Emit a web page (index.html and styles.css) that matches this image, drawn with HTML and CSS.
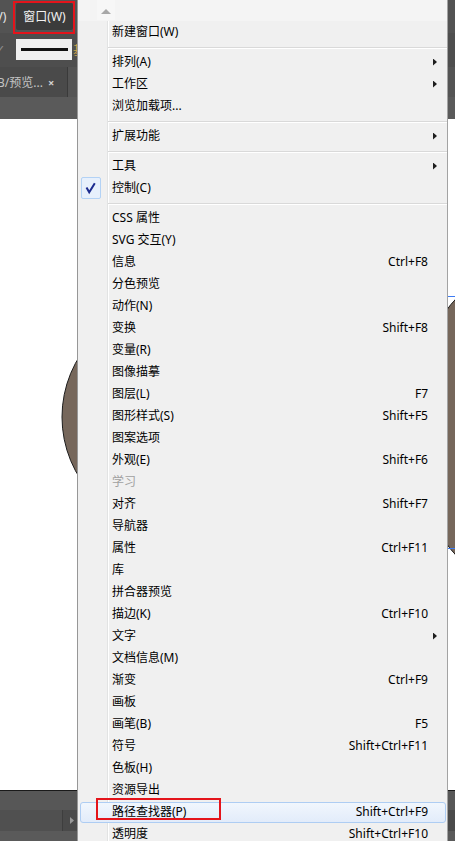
FILE: index.html
```html
<!DOCTYPE html>
<html lang="zh-CN">
<head>
    <meta charset="UTF-8">
    <meta name="viewport" content="width=device-width, initial-scale=1.0">
    <title>窗口菜单</title>
    <link rel="stylesheet" href="styles.css">
</head>
<body>
    <div class="app">
        <div class="menubar">
            <span class="menubar-prev">(V)</span>
            <span class="menubar-item">窗口(W)</span>
        </div>
        <div class="toolbar">
            <span class="tool-check">✓</span>
            <span class="stroke-box"><span class="stroke-line"></span></span>
            <span class="tool-label">基</span>
        </div>
        <div class="tabs">
            <span class="tab"><span class="tab-title">B/预览...</span><span class="tab-close">×</span></span>
        </div>
        <div class="rulerbar"></div>
        <div class="canvas">
            <svg width="455" height="671" viewBox="0 0 455 671">
                <circle cx="176" cy="298" r="114" fill="#76675b" stroke="#1e1e1e" stroke-width="1"/>
                <circle cx="600" cy="308" r="193" fill="#76675b" stroke="#1e1e1e" stroke-width="1"/>
                <rect x="300.5" y="177.5" width="400" height="252" fill="none" stroke="#3d7bf2" stroke-width="1"/>
            </svg>
        </div>
        <div class="status-top"></div>
        <div class="status-mid"><span class="status-box"></span><span class="status-arrow"></span></div>
        <div class="status-bottom"></div>
    </div>

    <!-- red annotation around the menu title -->
    <div class="mark mark-title"></div>

    <div class="dropdown">
        <div class="menu-top">
            <span class="scroll-up">
                <svg width="18" height="20" viewBox="0 0 18 20"><polygon points="4,14 9,9 14,14" fill="#a8a8a8"/></svg>
            </span>
        </div>
        <div class="menu-list">
            <div class="menu-item"><span class="label">新建窗口(W)</span></div>
            <div class="menu-sep"></div>
            <div class="menu-item"><span class="label">排列(A)</span><span class="sub-arrow"></span></div>
            <div class="menu-item"><span class="label">工作区</span><span class="sub-arrow"></span></div>
            <div class="menu-item"><span class="label">浏览加载项...</span></div>
            <div class="menu-sep"></div>
            <div class="menu-item"><span class="label">扩展功能</span><span class="sub-arrow"></span></div>
            <div class="menu-sep"></div>
            <div class="menu-item"><span class="label">工具</span><span class="sub-arrow"></span></div>
            <div class="menu-item">
                <span class="check">
                    <svg width="20" height="22" viewBox="0 0 20 22"><path d="M5.5 10.5 L8.2 15.2 L13.8 6.2" fill="none" stroke="#1c2b8f" stroke-width="2"/></svg>
                </span>
                <span class="label">控制(C)</span>
            </div>
            <div class="menu-sep"></div>
            <div class="menu-item"><span class="label">CSS 属性</span></div>
            <div class="menu-item"><span class="label">SVG 交互(Y)</span></div>
            <div class="menu-item"><span class="label">信息</span><span class="shortcut">Ctrl+F8</span></div>
            <div class="menu-item"><span class="label">分色预览</span></div>
            <div class="menu-item"><span class="label">动作(N)</span></div>
            <div class="menu-item"><span class="label">变换</span><span class="shortcut">Shift+F8</span></div>
            <div class="menu-item"><span class="label">变量(R)</span></div>
            <div class="menu-item"><span class="label">图像描摹</span></div>
            <div class="menu-item"><span class="label">图层(L)</span><span class="shortcut">F7</span></div>
            <div class="menu-item"><span class="label">图形样式(S)</span><span class="shortcut">Shift+F5</span></div>
            <div class="menu-item"><span class="label">图案选项</span></div>
            <div class="menu-item"><span class="label">外观(E)</span><span class="shortcut">Shift+F6</span></div>
            <div class="menu-item disabled"><span class="label">学习</span></div>
            <div class="menu-item"><span class="label">对齐</span><span class="shortcut">Shift+F7</span></div>
            <div class="menu-item"><span class="label">导航器</span></div>
            <div class="menu-item"><span class="label">属性</span><span class="shortcut">Ctrl+F11</span></div>
            <div class="menu-item"><span class="label">库</span></div>
            <div class="menu-item"><span class="label">拼合器预览</span></div>
            <div class="menu-item"><span class="label">描边(K)</span><span class="shortcut">Ctrl+F10</span></div>
            <div class="menu-item"><span class="label">文字</span><span class="sub-arrow"></span></div>
            <div class="menu-item"><span class="label">文档信息(M)</span></div>
            <div class="menu-item"><span class="label">渐变</span><span class="shortcut">Ctrl+F9</span></div>
            <div class="menu-item"><span class="label">画板</span></div>
            <div class="menu-item"><span class="label">画笔(B)</span><span class="shortcut">F5</span></div>
            <div class="menu-item"><span class="label">符号</span><span class="shortcut">Shift+Ctrl+F11</span></div>
            <div class="menu-item"><span class="label">色板(H)</span></div>
            <div class="menu-item"><span class="label">资源导出</span></div>
            <div class="menu-item hovered"><span class="label">路径查找器(P)</span><span class="shortcut">Shift+Ctrl+F9</span></div>
            <div class="menu-item"><span class="label">透明度</span><span class="shortcut">Shift+Ctrl+F10</span></div>
        </div>
    </div>

    <!-- red annotation around the pathfinder item -->
    <div class="mark mark-item"></div>
</body>
</html>
```

FILE: styles.css
```css
html, body {
    margin: 0;
    padding: 0;
}

body {
    width: 455px;
    height: 841px;
    overflow: hidden;
    position: relative;
    background: #535353;
    font-family: "Noto Sans", "Noto Sans CJK SC", sans-serif;
    font-size: 12px;
}

/* background application window */
.app {
    display: flex;
    flex-direction: column;
    height: 841px;
}

.menubar {
    height: 33px;
    display: flex;
    align-items: center;
    background: #535353;
    color: #e6e6e6;
}

.menubar-prev {
    width: 16px;
    overflow: hidden;
    white-space: nowrap;
    text-indent: -8px;
}

.menubar-item {
    width: 57px;
    height: 27px;
    line-height: 27px;
    text-align: center;
    background: #3b3b3b;
    border-radius: 2px;
    color: #f2f2f2;
}

.toolbar {
    height: 34px;
    display: flex;
    align-items: center;
    background: #4e4e4e;
}

.tool-check {
    width: 16px;
    overflow: hidden;
    text-indent: -5px;
    color: #8c8c8c;
}

.stroke-box {
    width: 56px;
    height: 21px;
    margin-top: -1px;
    background: #efefef;
    display: flex;
    align-items: center;
    justify-content: center;
}

.stroke-line {
    width: 47px;
    height: 3px;
    background: #111;
}

.tool-label {
    margin-left: 1px;
    color: #c9a24a;
}

.tabs {
    height: 30px;
    display: flex;
    background: #545454;
}

.tab {
    width: 67px;
    display: flex;
    align-items: center;
    background: #4a4a4a;
    border-right: 1px solid #3a3a3a;
    color: #c4c4c4;
}

.tab-title {
    white-space: nowrap;
    overflow: hidden;
    text-indent: -3px;
}

.tab-close {
    margin-left: 5px;
    font-size: 11px;
    font-weight: bold;
    color: #d0d0d0;
}

.rulerbar {
    height: 22px;
    background: #5a5a5a;
}

.canvas {
    height: 671px;
    background: #fff;
}

.canvas svg {
    display: block;
}

.status-top {
    height: 19px;
    border-top: 1px solid #1a1a1a;
    background: #575757;
}

.status-mid {
    height: 21px;
    display: flex;
    align-items: center;
    background: #4a4a4a;
}

.status-box {
    width: 62px;
    height: 21px;
    background: #505050;
    border-right: 1px solid #3e3e3e;
}

.status-arrow {
    width: 4px;
    height: 7px;
    margin-left: 7px;
    background: #9a9a9a;
    clip-path: polygon(0 0, 100% 50%, 0 100%);
}

.status-bottom {
    height: 10px;
    background: #5a5a5a;
}

/* dropdown menu */
.dropdown {
    position: absolute;
    top: 0;
    left: 77px;
    width: 369px;
    height: 841px;
    overflow: hidden;
    border-left: 1px solid #979797;
    border-right: 1px solid #a3a3a3;
    background: #f0f0f0;
    color: #000;
}

.menu-top {
    height: 21px;
    padding-left: 19px;
    background: #f4f4f4;
}

.scroll-up {
    display: block;
    width: 18px;
    height: 20px;
    background: #f7f7f7;
}

.scroll-up svg {
    display: block;
}

.menu-list {
    background: linear-gradient(to right, #f0f0f0 29px, #e2e3e3 29px, #e2e3e3 30px, #ffffff 30px, #ffffff 31px, #f0f0f0 31px);
}

.menu-item {
    position: relative;
    height: 22px;
    display: grid;
    grid-template-columns: 3px 20px 11px 1fr auto 19px;
    align-items: center;
    line-height: 22px;
}

.menu-item .check {
    grid-column: 2;
    position: relative;
    z-index: 1;
    height: 20px;
    border: 1px solid #b3d2f5;
    border-radius: 2px;
    background: #e7f0fc;
    box-sizing: content-box;
    width: 18px;
}

.menu-item .check svg {
    display: block;
    margin: -1px 0 0 -1px;
}

.menu-item .label {
    grid-column: 4;
    position: relative;
    white-space: nowrap;
}

.menu-item .shortcut {
    grid-column: 5;
    position: relative;
    white-space: nowrap;
}

.menu-item .sub-arrow {
    grid-column: 6;
    width: 4px;
    height: 7px;
    margin-left: 5px;
    background: #1e1e1e;
    clip-path: polygon(0 0, 100% 50%, 0 100%);
}

.menu-item.disabled {
    color: #a0a0a0;
}

.menu-item.hovered::before {
    content: "";
    position: absolute;
    top: 1px;
    right: 1px;
    bottom: 0;
    left: 2px;
    border: 1px solid #aecdf3;
    border-radius: 3px;
    background: linear-gradient(#f1f6fd, #e2ecfa);
}

.menu-sep {
    height: 8px;
    position: relative;
}

.menu-sep::after {
    content: "";
    position: absolute;
    top: 4px;
    left: 30px;
    right: 0;
    height: 1px;
    background: #d9d9d9;
    border-bottom: 1px solid #fff;
}

/* red annotation boxes */
.mark {
    position: absolute;
    border: 2px solid #e4141b;
    box-sizing: border-box;
}

.mark-title {
    left: 13px;
    top: 1px;
    width: 62px;
    height: 33px;
}

.mark-item {
    left: 96px;
    top: 798px;
    width: 125px;
    height: 22px;
}
```
